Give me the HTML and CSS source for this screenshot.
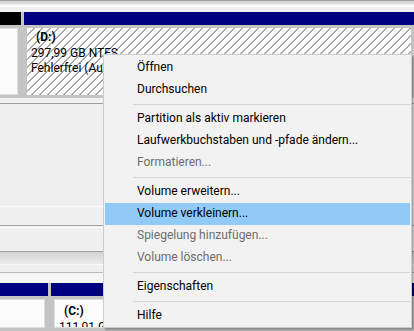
FILE: index.html
```html
<!DOCTYPE html>
<html lang="de">
<head>
<meta charset="utf-8">
<title>Datenträgerverwaltung</title>
<link rel="stylesheet" href="styles.css">
</head>
<body>
<div class="page">
  <div class="top-edge"></div>

  <div class="disk disk-top">
    <div class="part part-unalloc-top">
      <div class="bar bar-black"></div>
      <div class="pbody"><div class="inner"></div></div>
    </div>
    <div class="part part-grow">
      <div class="bar bar-navy"></div>
      <div class="pbody">
        <div class="inner hatch">
          <div class="vol-name">(D:)</div>
          <div class="vol-line">297,99 GB NTFS</div>
          <div class="vol-line">Fehlerfrei (Auslagerungsdatei, Primäre Partition)</div>
        </div>
      </div>
    </div>
  </div>

  <div class="gap1"></div>
  <div class="pane"></div>
  <div class="strip1"></div>
  <div class="strip2"></div>
  <div class="strip3"></div>
  <div class="grad"></div>
  <div class="strip4"></div>
  <div class="strip5"></div>

  <div class="disk disk-bottom">
    <div class="part part-unalloc-bottom">
      <div class="bar bar-navy"></div>
      <div class="pbody"><div class="inner"></div></div>
    </div>
    <div class="part part-grow">
      <div class="bar bar-navy"></div>
      <div class="pbody">
        <div class="inner plain">
          <div class="vol-name">(C:)</div>
          <div class="vol-line">111,01 GB NTFS</div>
        </div>
      </div>
    </div>
  </div>

  <div class="menu">
    <div class="item">Öffnen</div>
    <div class="item">Durchsuchen</div>
    <div class="sep"></div>
    <div class="item">Partition als aktiv markieren</div>
    <div class="item">Laufwerkbuchstaben und -pfade ändern...</div>
    <div class="item disabled">Formatieren...</div>
    <div class="sep"></div>
    <div class="item">Volume erweitern...</div>
    <div class="item active">Volume verkleinern...</div>
    <div class="item disabled">Spiegelung hinzufügen...</div>
    <div class="item disabled">Volume löschen...</div>
    <div class="sep"></div>
    <div class="item">Eigenschaften</div>
    <div class="sep"></div>
    <div class="item">Hilfe</div>
  </div>
</div>
</body>
</html>
```

FILE: styles.css
```css
* { box-sizing: border-box; }
html, body { margin: 0; padding: 0; }
body {
  width: 414px;
  height: 331px;
  overflow: hidden;
  background: #f0f0f0;
  font-family: Roboto, "Segoe UI", sans-serif;
  font-size: 12px;
  color: #000;
}
.page {
  position: relative;
  width: 414px;
  height: 331px;
  overflow: hidden;
}
.top-edge {
  height: 12px;
  border-top: 1px solid #a0a0a0;
  background: linear-gradient(#cfcfcf 0, #e2e2e2 3px, #fcfcfc 4px, #fcfcfc 6px, #f0f0f0 6px);
}

/* disk rows */
.disk {
  display: flex;
  gap: 3px;
  background: #c4c4c4;
}
.disk-top { height: 86px; }
.disk-bottom { height: 48px; }
.part {
  display: flex;
  flex-direction: column;
}
.part-unalloc-top { width: 21px; }
.part-unalloc-bottom { width: 48px; }
.part-grow { flex: 1; min-width: 0; }
.bar { height: 13px; flex: none; }
.bar-black { background: #000; }
.bar-navy { background: #000080; }
.pbody {
  flex: 1;
  padding: 3px;
  min-height: 0;
}
.part:first-child .pbody { padding-left: 0; }
.inner {
  height: 100%;
  background: #fcfcfc;
  border: 1px solid #dedede;
  border-left: none;
  white-space: nowrap;
  overflow: hidden;
  line-height: 15.5px;
}
.hatch {
  border: none;
  padding: 2px 4px 0;
  background: repeating-linear-gradient(135deg, #fdfdfd 0, #fdfdfd 4.5px, #ababab 4.5px, #ababab 5.66px);
}
.plain {
  border-left: 1px solid #dedede;
  padding: 4px 4px 0 4px;
}
.vol-name {
  font-weight: bold;
  padding-left: 5px;
}

/* area between disks */
.gap1 { height: 6px; border-bottom: 1px solid #a0a0a0; }
.pane { height: 103px; border-bottom: 1px solid #fcfcfc; }
.strip1 { height: 19px; border-bottom: 1px solid #a0a0a0; }
.strip2 { height: 2px; border-bottom: 1px solid #fcfcfc; }
.strip3 { height: 24px; border-bottom: 1px solid #a0a0a0; }
.grad {
  height: 13px;
  background: linear-gradient(#d2d2d2, #ececec);
  border-bottom: 1px solid #fafafa;
}
.strip4 { height: 8px; border-bottom: 1px solid #b8b8b8; }
.strip5 { height: 10px; background: #f6f6f6; }

/* context menu */
.menu {
  position: absolute;
  left: 103px;
  top: 54px;
  width: 309px;
  background: #f2f2f2;
  border: 1px solid #cccccc;
  padding: 2px 1px 0 1px;
  box-shadow: 2px 2px 2px rgba(0, 0, 0, 0.32);
}
.item {
  height: 22px;
  line-height: 21px;
  padding: 0 0 1px 32px;
  white-space: nowrap;
}
.item.disabled { color: #6d6d6d; }
.item.active { background: #91c9f7; }
.sep {
  height: 7px;
  padding-top: 3px;
  margin-left: 28px;
}
.sep::before {
  content: "";
  display: block;
  height: 1px;
  background: #d7d7d7;
}
```
